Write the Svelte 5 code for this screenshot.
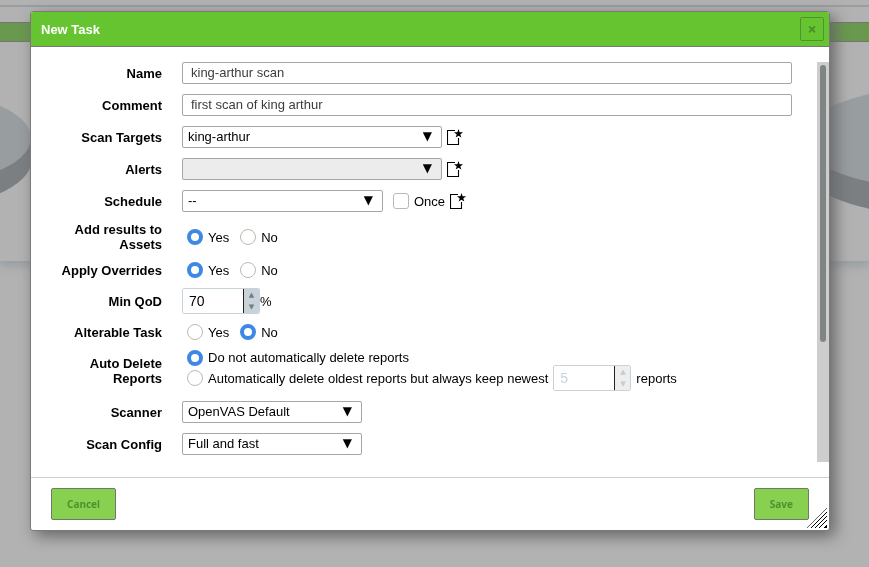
<script>
  let name = $state('king-arthur scan');
  let comment = $state('first scan of king arthur');
  let addResults = $state('yes');
  let overrides = $state('yes');
  let alterable = $state('no');
  let autoDelete = $state('no');
  let minQod = $state(70);
  let keep = $state(5);
  let once = $state(false);
</script>

{#snippet newIcon(title)}
  <button type="button" class="icon" aria-label={title}>
    <svg viewBox="0 0 16 16" width="16" height="16">
      <path d="M8 1.5H.5v14h11V9" fill="none" stroke="#000" stroke-width="1.1" />
      <path d="M11.5 0l1.1 3.200 3.400.1-2.700 2.100 1 3.200-2.800-1.900-2.800 1.900 1-3.200L7 3.300l3.400-.1z" fill="#000" />
    </svg>
  </button>
{/snippet}

{#snippet dropdown(id, value, size, disabled)}
  <span class="select {size}">
    <select {id} {disabled}><option>{value}</option></select>
    <span class="arrow" aria-hidden="true">▼</span>
  </span>
{/snippet}

{#snippet yesNo(group, value, set)}
  <div class="line radios" role="radiogroup" aria-labelledby="{group}-label">
    <label class="choice"><input type="radio" name={group} checked={value === 'yes'} onchange={() => set('yes')} />Yes</label>
    <label class="choice"><input type="radio" name={group} checked={value === 'no'} onchange={() => set('no')} />No</label>
  </div>
{/snippet}

<div class="page" aria-hidden="true">
  <div class="topline"></div>
  <div class="menubar"></div>
  <div class="charts">
    <svg class="pie" width="130" height="170" viewBox="0 0 130 170">
      <path d="M-230 96v27a131 50 0 0 0 261 0v-27z" fill="#7b7f82" />
      <ellipse cx="-100" cy="96" rx="131" ry="50" fill="#989da0" />
    </svg>
    <svg class="pie" width="130" height="170" viewBox="0 0 130 170">
      <path d="M63 96v27a130 50 0 0 0 260 0v-27z" fill="#7b7f82" />
      <ellipse cx="193" cy="96" rx="130" ry="50" fill="#989da0" />
    </svg>
  </div>
</div>

<div class="overlay">
  <div class="dialog" role="dialog" aria-labelledby="title">
    <header>
      <h1 id="title">New Task</h1>
      <button type="button" class="close" aria-label="Close">×</button>
    </header>

    <div class="body">
      <form class="fields">
        <div class="row">
          <label class="name" for="name">Name</label>
          <input class="text" id="name" bind:value={name} />
        </div>
        <div class="row">
          <label class="name" for="comment">Comment</label>
          <input class="text" id="comment" bind:value={comment} />
        </div>
        <div class="row">
          <label class="name" for="targets">Scan Targets</label>
          <div class="line">{@render dropdown('targets', 'king-arthur', 'wide', false)}{@render newIcon('Create a new target')}</div>
        </div>
        <div class="row">
          <label class="name" for="alerts">Alerts</label>
          <div class="line">{@render dropdown('alerts', '', 'wide', true)}{@render newIcon('Create a new alert')}</div>
        </div>
        <div class="row">
          <label class="name" for="schedule">Schedule</label>
          <div class="line">
            {@render dropdown('schedule', '--', 'medium', false)}
            <label class="choice once"><input type="checkbox" bind:checked={once} />Once</label>
            {@render newIcon('Create a new schedule')}
          </div>
        </div>
        <div class="row">
          <span class="name" id="assets-label">Add results to Assets</span>
          {@render yesNo('assets', addResults, (v) => (addResults = v))}
        </div>
        <div class="row">
          <span class="name" id="overrides-label">Apply Overrides</span>
          {@render yesNo('overrides', overrides, (v) => (overrides = v))}
        </div>
        <div class="row">
          <label class="name" for="qod">Min QoD</label>
          <div class="unit">
            <span class="spinner">
              <input type="number" id="qod" min="0" max="100" bind:value={minQod} />
              <span class="steps">
                <button type="button" aria-label="Increase" onclick={() => minQod++}>▲</button>
                <button type="button" aria-label="Decrease" onclick={() => minQod--}>▼</button>
              </span>
            </span>%
          </div>
        </div>
        <div class="row">
          <span class="name" id="alterable-label">Alterable Task</span>
          {@render yesNo('alterable', alterable, (v) => (alterable = v))}
        </div>
        <div class="row">
          <span class="name" id="delete-label">Auto Delete Reports</span>
          <div class="stack" role="radiogroup" aria-labelledby="delete-label">
            <label class="choice"><input type="radio" value="no" bind:group={autoDelete} />Do not automatically delete reports</label>
            <div class="line">
              <label class="choice"><input type="radio" value="keep" bind:group={autoDelete} />Automatically delete oldest reports but always keep newest</label>
              <span class="spinner off">
                <input type="number" aria-label="Reports to keep" disabled bind:value={keep} />
                <span class="steps">
                  <button type="button" disabled aria-label="Increase">▲</button>
                  <button type="button" disabled aria-label="Decrease">▼</button>
                </span>
              </span>
              <span>reports</span>
            </div>
          </div>
        </div>
        <div class="row">
          <label class="name" for="scanner">Scanner</label>
          <div class="line">{@render dropdown('scanner', 'OpenVAS Default', 'small', false)}</div>
        </div>
        <div class="row">
          <label class="name" for="config">Scan Config</label>
          <div class="line">{@render dropdown('config', 'Full and fast', 'small', false)}</div>
        </div>
      </form>
      <div class="track"><div class="thumb"></div></div>
    </div>

    <footer>
      <button type="button">Cancel</button>
      <button type="button">Save</button>
    </footer>
    <svg class="grip" width="20" height="20" viewBox="0 0 20 20" aria-hidden="true">
      <path d="M0 20L20 0" stroke="#666" />
      <path d="M4 20L20 4M8 20L20 8M12 20L20 12" stroke="#000" />
      <path d="M16 20L20 16V20z" fill="#000" />
    </svg>
  </div>
</div>

<style>
  :global(body) {
    background: #b2b2b2;
    font: 13px/15px 'Liberation Sans', Arial, sans-serif;
    color: #000;
  }
  .page {
    position: fixed;
    inset: 0;
    overflow: hidden;
    padding-top: 5px;
  }
  .topline {
    height: 2px;
    background: #989ea2;
  }
  .menubar {
    height: 18px;
    margin-top: 15px;
    background: #69994e;
    border: solid #737573;
    border-width: 1px 0;
  }
  .charts {
    display: flex;
    justify-content: space-between;
    height: 219px;
    box-shadow: 0 4px 10px #929a9f;
    clip-path: inset(0 0 -20px 0);
  }
  .pie {
    display: block;
  }
  .overlay {
    position: fixed;
    inset: 0;
    padding: 11px 39px 36px 30px;
    overflow: auto;
  }
  .dialog {
    position: relative;
    background: #fff;
    border: 1px solid #7a7a7a;
    border-radius: 3px;
    box-shadow: 5px 5px 15px #656565;
  }
  header {
    display: flex;
    align-items: center;
    justify-content: space-between;
    height: 34px;
    padding: 0 5px 0 10px;
    background: #66c430;
    border-bottom: 1px solid #787878;
    border-radius: 2px 2px 0 0;
  }
  h1 {
    margin: 0;
    font-size: 13px;
    color: #fff;
  }
  .close {
    width: 24px;
    height: 24px;
    padding: 0;
    border: 1px solid #519130;
    border-radius: 2px;
    background: none;
    color: #4c8a2c;
    font: bold 16px/20px 'Noto Sans', sans-serif;
  }
  .body {
    display: flex;
    gap: 25px;
    padding: 15px 0;
  }
  .fields {
    flex: 1;
    display: flex;
    flex-direction: column;
    gap: 10px;
    padding: 0 0 7px 20px;
  }
  .row {
    display: flex;
    align-items: center;
    gap: 20px;
  }
  .name {
    flex: none;
    width: 111px;
    text-align: right;
    font-weight: bold;
  }
  .text {
    flex: 1;
    min-width: 0;
    box-sizing: border-box;
    height: 22px;
    padding: 0 8px 1px;
    border: 1px solid #a6a6a6;
    border-radius: 2px;
    font: inherit;
    color: #3c3c3c;
  }
  .line,
  .unit {
    display: flex;
    align-items: center;
  }
  .line {
    gap: 5px;
  }
  .radios {
    gap: 11px;
    padding-left: 5px;
  }
  .select {
    position: relative;
    display: flex;
  }
  .wide {
    width: 260px;
  }
  .medium {
    width: 201px;
  }
  .small {
    width: 180px;
  }
  select {
    appearance: none;
    width: 100%;
    height: 22px;
    padding: 0 25px 1px 5px;
    border: 1px solid #a6a6a6;
    border-radius: 2px;
    background: #fff;
    font: inherit;
    color: #000;
    opacity: 1;
  }
  select:disabled {
    background: #ececec;
  }
  .arrow {
    position: absolute;
    right: 10px;
    top: 3px;
    font: 12px/15px 'DejaVu Sans', sans-serif;
    pointer-events: none;
  }
  .icon {
    display: flex;
    padding: 0;
    border: 0;
    background: none;
  }
  .choice {
    display: flex;
    align-items: center;
    gap: 5px;
  }
  .once {
    margin-left: 5px;
  }
  .choice input {
    appearance: none;
    flex: none;
    box-sizing: border-box;
    width: 16px;
    height: 16px;
    margin: 0;
    border: 1px solid #bfb8b1;
    border-radius: 3px;
    background: #fff;
  }
  .choice input[type='radio'] {
    border-radius: 50%;
  }
  .choice input[type='radio']:checked {
    border: 4px solid #3d88e4;
  }
  .stack {
    display: flex;
    flex-direction: column;
    padding-left: 5px;
  }
  .stack > .choice {
    height: 15px;
  }
  .spinner {
    display: flex;
    box-sizing: border-box;
    width: 78px;
    height: 26px;
    border: 1px solid #c8d3d9;
    border-radius: 2px;
    overflow: hidden;
  }
  .spinner input {
    appearance: textfield;
    flex: 1;
    min-width: 0;
    padding: 0 6px;
    border: 0;
    background: #fff;
    font: 14px/24px 'Liberation Sans', Arial, sans-serif;
    color: #000;
  }
  .steps {
    display: flex;
    flex-direction: column;
    width: 15px;
    border-left: 1px solid #222;
    background: #c8d3d9;
  }
  .steps button {
    height: 12px;
    padding: 0;
    border: 0;
    background: none;
    font: 7px/12px 'DejaVu Sans', sans-serif;
    color: #787b7d;
  }
  .off input {
    color: #c8d3d9;
  }
  .off .steps {
    background: #eee;
  }
  .off .steps button {
    color: #c3ced4;
  }
  .track {
    width: 12px;
    box-sizing: border-box;
    padding: 3px;
    background: #cdcdcd;
  }
  .thumb {
    height: 277px;
    border-radius: 3px;
    background: #7f8484;
  }
  footer {
    display: flex;
    justify-content: space-between;
    padding: 10px 20px;
    border-top: 1px solid #c8d3d9;
  }
  footer button {
    height: 32px;
    padding: 0 15px;
    border: 1px solid #6f7a69;
    border-radius: 2px;
    background: #88d150;
    color: #4f9130;
    font: bold 10px/30px 'Noto Sans', sans-serif;
  }
  .grip {
    position: absolute;
    right: 2px;
    bottom: 2px;
    shape-rendering: crispEdges;
  }
</style>
